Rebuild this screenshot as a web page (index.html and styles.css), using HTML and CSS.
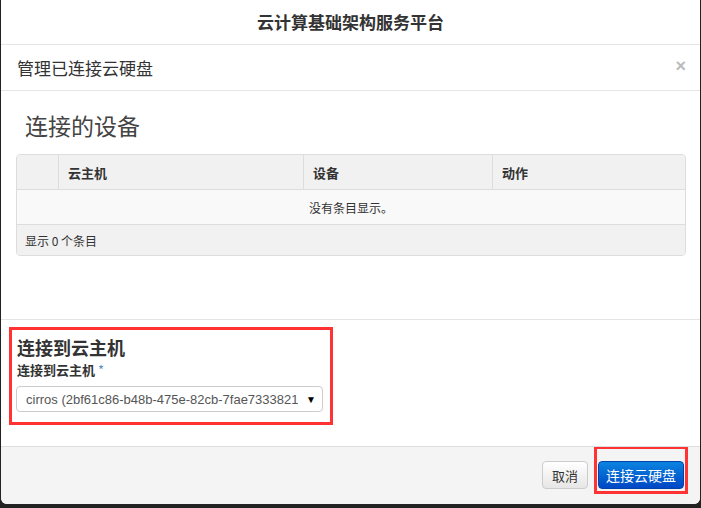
FILE: index.html
```html
<!DOCTYPE html>
<html lang="zh">
<head>
<meta charset="utf-8">
<link rel="stylesheet" href="styles.css">
</head>
<body>
<div class="modal">
  <div class="topbar">云计算基础架构服务平台</div>
  <div class="mhead">
    <h3 class="mtitle">管理已连接云硬盘</h3>
    <span class="close">×</span>
  </div>
  <div class="mbody">
    <h2 class="sect">连接的设备</h2>
    <div class="tbl">
      <div class="trow thead">
        <div class="c c0"></div>
        <div class="c c1">云主机</div>
        <div class="c c2">设备</div>
        <div class="c c3">动作</div>
      </div>
      <div class="trow tempty">没有条目显示。</div>
      <div class="trow tfoot">显示 0 个条目</div>
    </div>
  </div>
  <div class="attach">
    <div class="hl">
      <h3 class="atitle">连接到云主机</h3>
      <div class="lbl">连接到云主机 <span class="req">*</span></div>
      <div class="sel"><span class="seltext">cirros (2bf61c86-b48b-475e-82cb-7fae73338210)</span><span class="arrow">▼</span></div>
    </div>
  </div>
  <div class="mfoot">
    <button class="btn cancel">取消</button>
    <div class="hl2"><button class="btn primary">连接云硬盘</button></div>
  </div>
</div>
</body>
</html>
```
FILE: styles.css
```css
html, body { margin: 0; padding: 0; }
body {
  background: #222;
  width: 701px;
  height: 508px;
  overflow: hidden;
  font-family: "Noto Sans CJK SC", "Liberation Sans", sans-serif;
  color: #333;
}
.modal {
  margin-left: 1px;
  width: 699px;
  height: 504px;
  background: #fff;
  border-radius: 0 0 6px 6px;
  overflow: hidden;
  display: flex;
  flex-direction: column;
}
.topbar {
  height: 44px;
  line-height: 44px;
  text-align: center;
  font-size: 17px;
  font-weight: bold;
  color: #333;
  border-bottom: 1px solid #e5e5e5;
}
.mhead {
  height: 45px;
  border-bottom: 1px solid #e5e5e5;
  display: flex;
  align-items: center;
  justify-content: space-between;
  padding: 0 14px 0 16px;
}
.mtitle {
  margin: 0;
  font-family: "Noto Sans CJK SC", serif;
  font-weight: normal;
  font-size: 17px;
  color: #333;
}
.close {
  color: #bbb;
  font-size: 18px;
  font-weight: bold;
  font-family: "Liberation Sans", sans-serif;
  margin-top: -3px;
}
.mbody {
  height: 228px;
  padding: 0 15px;
  border-bottom: 1px solid #e5e5e5;
}
.sect {
  margin: 0;
  padding: 18px 0 0 9px;
  font-size: 23px;
  font-weight: normal;
  line-height: 32px;
  color: #444;
  box-sizing: border-box;
  height: 63px;
}
.tbl {
  border: 1px solid #ddd;
  border-radius: 4px;
  overflow: hidden;
  width: 668px;
}
.trow {
  display: flex;
  font-size: 12px;
}
.thead {
  height: 34px;
  background: #f1f1f1;
  border-bottom: 1px solid #ddd;
  font-weight: bold;
  font-size: 13px;
}
.c {
  display: flex;
  align-items: center;
  padding-left: 9px;
  box-sizing: border-box;
}
.c0 { width: 42px; border-right: 1px solid #ddd; padding: 0; }
.c1 { width: 245px; border-right: 1px solid #ddd; }
.c2 { width: 189px; border-right: 1px solid #ddd; }
.c3 { flex: 1; }
.tempty {
  height: 34px;
  background: #f9f9f9;
  border-bottom: 1px solid #ddd;
  justify-content: center;
  align-items: center;
}
.tfoot {
  height: 30px;
  background: #f1f1f1;
  align-items: center;
  padding-left: 8px;
}
.attach {
  height: 127px;
  padding: 7px 0 0 8px;
  box-sizing: border-box;
  border-bottom: 1px solid #ddd;
}
.hl {
  height: 92px;
  border: 3px solid #f33;
  padding: 0 0 0 5px;
  width: 313px;
}
.atitle {
  margin: 0;
  padding-top: 6px;
  font-size: 18px;
  line-height: 22px;
  font-weight: bold;
  color: #333;
}
.lbl {
  font-size: 13px;
  font-weight: bold;
  line-height: 18px;
  margin-top: 3px;
  color: #333;
}
.req { color: #5b8fc7; font-weight: normal; }
.sel {
  margin-top: 7px;
  margin-left: -1px;
  width: 305px;
  height: 24px;
  border: 1px solid #ccc;
  border-radius: 4px;
  display: flex;
  align-items: center;
  justify-content: space-between;
  font-family: "Liberation Sans", sans-serif;
  font-size: 13px;
  color: #555;
  overflow: hidden;
}
.seltext {
  padding-left: 9px;
  width: 272px;
  overflow: hidden;
  white-space: nowrap;
}
.arrow {
  font-size: 10px;
  color: #000;
  padding-right: 6px;
}
.mfoot {
  flex: 1;
  background: #f4f4f4;
  display: flex;
  align-items: flex-start;
  justify-content: flex-end;
  padding-right: 12px;
}
.btn {
  font-family: "Noto Sans CJK SC", sans-serif;
  font-size: 13px;
  height: 28px;
  border-radius: 4px;
  cursor: pointer;
}
.cancel {
  margin-top: 14px;
  width: 46px;
  padding: 0;
  color: #333;
  border: 1px solid #ccc;
  background: linear-gradient(#fff, #e6e6e6);
}
.hl2 {
  margin-left: 6px;
  border: 3px solid #f33;
  border-top-width: 2px;
  padding: 12px 0 2px 1px;
  box-sizing: content-box;
  width: 87px;
  height: 28px;
}
.primary {
  width: 86px;
  padding: 0;
  font-size: 14px;
  color: #fff;
  border: 1px solid #0044aa;
  background: linear-gradient(#0a84e0, #0047c4);
}
```
